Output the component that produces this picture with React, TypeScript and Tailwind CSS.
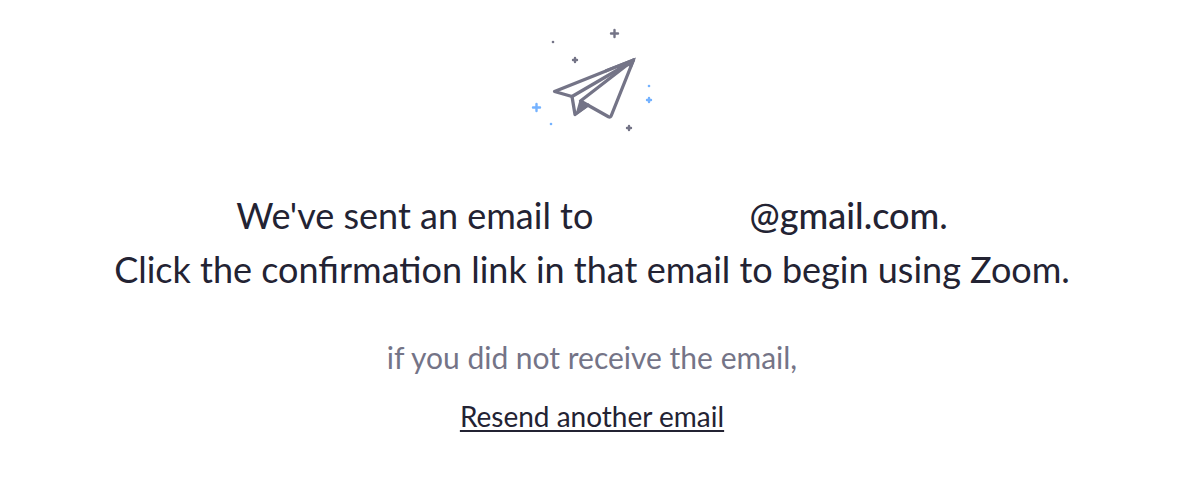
const PaperPlane = () => {
  return (
    <svg
      width="128"
      height="108"
      viewBox="528 26 128 108"
      fill="none"
      strokeLinecap="round"
      strokeLinejoin="round"
      aria-hidden="true"
    >
      <g stroke="#747487" strokeWidth="3.3">
        <path d="M633.5 60 L554.5 91.5 L572 96.5 L575 114.5 L588 105" />
        <path d="M632 61.5 L572 96.5" />
        <path d="M633.5 60 L580.5 101 L608.5 116.8 Q610.5 117.8 611.5 115 Z" />
      </g>
      <path
        d="M636 57.5 L605 69.5 L606 72.5 L618 67 L616 71 L628 66 L632 67.5 Z"
        fill="#747487"
      />
      <path d="M579.5 100 L590 105.5 L575 116 Z" fill="#747487" />
      <g stroke="#747487" strokeWidth="2.4">
        <path d="M611 33.5 H618 M614.5 30 V37" />
        <path d="M573 60 H577 M575 58 V62" />
        <path d="M627 128 H631 M629 126 V130" />
      </g>
      <g stroke="#74b2ff" strokeWidth="2.4">
        <path d="M533 107.5 H540 M536.5 104 V111" />
        <path d="M647 100 H651 M649 98 V102" />
      </g>
      <circle cx="553" cy="42" r="1.3" fill="#747487" />
      <circle cx="649" cy="86" r="1.3" fill="#74b2ff" />
      <circle cx="551" cy="124" r="1.3" fill="#74b2ff" />
    </svg>
  );
};

const App = () => {
  return (
    <main className="flex flex-col items-center bg-white pt-[26px] pl-1.5 text-center font-['Lato',sans-serif] text-[#232333]">
      <PaperPlane />

      <h1 className="mt-[54px] text-[36px] leading-[54px] font-normal">
        We've sent an email to{" "}
        <span className="font-medium">
          <span className="inline-block w-[147px]" />
          @gmail.com
        </span>
        .
        <br />
        Click the confirmation link in that email to begin using Zoom.
      </h1>

      <p className="mt-[34px] text-[30px] leading-[54px] text-[#747487]">
        if you did not receive the email,
      </p>
      <a
        href="#resend"
        className="mt-2 text-[28px] leading-[48px] underline decoration-2 underline-offset-3"
      >
        Resend another email
      </a>
    </main>
  );
};

export default App;
